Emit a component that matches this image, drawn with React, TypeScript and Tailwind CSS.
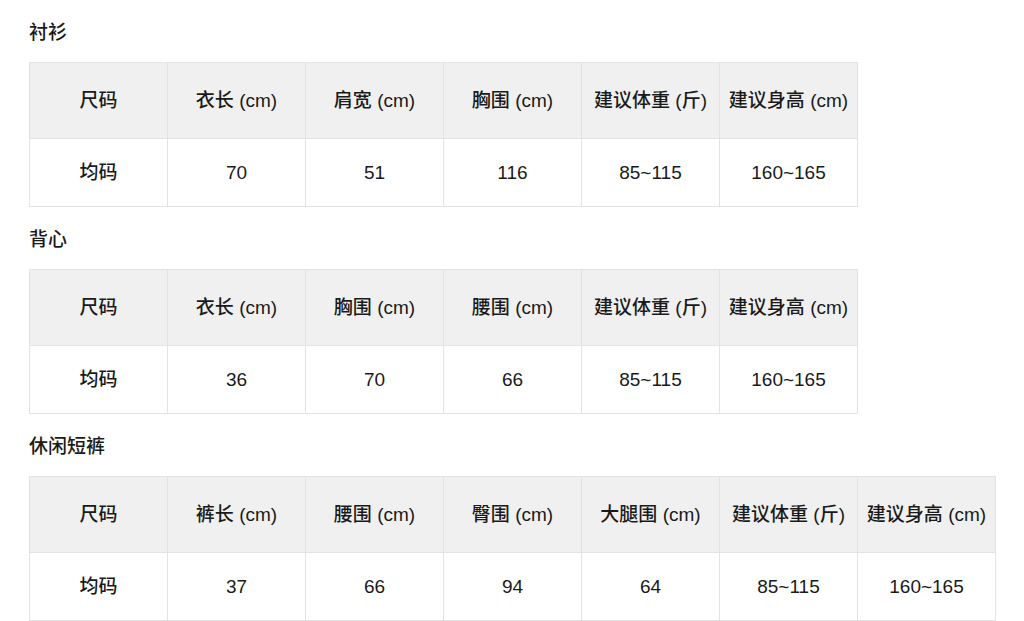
import React from "react";

const sections = [
  {
    title: "衬衫",
    headers: ["尺码", "衣长 (cm)", "肩宽 (cm)", "胸围 (cm)", "建议体重 (斤)", "建议身高 (cm)"],
    values: ["均码", "70", "51", "116", "85~115", "160~165"],
  },
  {
    title: "背心",
    headers: ["尺码", "衣长 (cm)", "胸围 (cm)", "腰围 (cm)", "建议体重 (斤)", "建议身高 (cm)"],
    values: ["均码", "36", "70", "66", "85~115", "160~165"],
  },
  {
    title: "休闲短裤",
    headers: ["尺码", "裤长 (cm)", "腰围 (cm)", "臀围 (cm)", "大腿围 (cm)", "建议体重 (斤)", "建议身高 (cm)"],
    values: ["均码", "37", "66", "94", "64", "85~115", "160~165"],
  },
];

export default function App() {
  return (
    <div
      className="bg-white pl-[29px] pt-[20px] font-medium text-[#1a1a1a]"
      style={{ fontFamily: '"Liberation Sans", "Noto Sans CJK SC", sans-serif' }}
    >
      {sections.map((s, i) => (
        <div key={i} className="mb-[20px]">
          <div className="mb-[18px] h-[24px] pt-[1px] text-[19px] leading-[24px]">{s.title}</div>
          <table className="border-collapse">
            <thead>
              <tr>
                {s.headers.map((h, j) => (
                  <th
                    key={j}
                    className="h-[76px] w-[138px] border border-[#e3e3e3] bg-[#f0f0f0] p-0 pt-[2px] text-center align-middle text-[19px] font-medium"
                  >
                    {h}
                  </th>
                ))}
              </tr>
            </thead>
            <tbody>
              <tr>
                {s.values.map((v, j) => (
                  <td
                    key={j}
                    className="h-[68px] w-[138px] border border-[#e3e3e3] p-0 pt-[2px] text-center align-middle text-[19px]"
                  >
                    {v}
                  </td>
                ))}
              </tr>
            </tbody>
          </table>
        </div>
      ))}
    </div>
  );
}
